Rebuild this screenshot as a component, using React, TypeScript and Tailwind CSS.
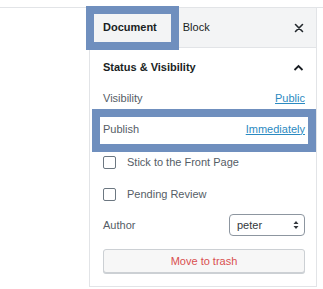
import React from "react";

export default function App() {
  return (
    <div className="relative w-[323px] h-[289px] bg-white overflow-hidden text-[11px]" style={{ fontFamily: '"Liberation Sans", Arial, sans-serif' }}>
      <div className="h-[8px] border-b border-[#e2e4e7]" />
      <div className="flex">
        <div className="w-[89px]" />
        <div className="w-[228px] border-l border-r border-[#e2e4e7]">
          <div className="h-[40px] bg-[#f3f4f5] border-b border-[#e2e4e7] flex items-center pl-[13px] pr-[11px]">
            <span className="font-bold text-[#191e23]">Document</span>
            <span className="ml-[26px] text-[#191e23]">Block</span>
            <svg className="ml-auto mr-[1px]" width="10" height="10" viewBox="0 0 10 10">
              <path d="M1.5 1.5 L8.5 8.5 M8.5 1.5 L1.5 8.5" stroke="#23282d" strokeWidth="1.6" strokeLinecap="round" />
            </svg>
          </div>
          <div className="pl-[13px] pr-[11px] pb-[13px] border-b border-[#e2e4e7]">
            <div className="h-[39px] flex items-center justify-between">
              <span className="font-bold text-[#191e23]">Status &amp; Visibility</span>
              <svg className="mr-[1px]" width="11" height="8" viewBox="0 0 11 8">
                <path d="M1.5 6 L5.5 2 L9.5 6" fill="none" stroke="#191e23" strokeWidth="1.8" />
              </svg>
            </div>
            <div className="h-[22px] flex items-center justify-between">
              <span className="text-[#555d66]">Visibility</span>
              <span className="text-[#2b8ac1] underline">Public</span>
            </div>
            <div className="mt-[9px] h-[22px] flex items-center justify-between">
              <span className="text-[#555d66]">Publish</span>
              <span className="text-[#2b8ac1] underline">Immediately</span>
            </div>
            <div className="mt-[11px] h-[22px] flex items-center">
              <span className="w-[13px] h-[13px] border-[1.5px] border-[#6c7781] rounded-[2px]" />
              <span className="ml-[11px] text-[#555d66]">Stick to the Front Page</span>
            </div>
            <div className="mt-[10px] h-[22px] flex items-center">
              <span className="w-[13px] h-[13px] border-[1.5px] border-[#6c7781] rounded-[2px]" />
              <span className="ml-[11px] text-[#555d66]">Pending Review</span>
            </div>
            <div className="mt-[9px] h-[22px] flex items-center justify-between">
              <span className="text-[#555d66]">Author</span>
              <div className="w-[76px] h-[22px] border border-[#8d96a0] rounded-[4px] flex items-center pl-[7px] pr-[5px] text-[#32373c]">
                <span>peter</span>
                <svg className="ml-auto" width="6" height="10" viewBox="0 0 6 10">
                  <path d="M0.5 4 L3 1 L5.5 4 Z M0.5 6 L3 9 L5.5 6 Z" fill="#32373c" />
                </svg>
              </div>
            </div>
            <div className="mt-[13px] h-[24px] border border-[#ccd0d4] rounded-[3px] bg-[#f7f7f7] shadow-[0_1px_0_#ccd0d4] flex items-center justify-center text-[#d94f4f]">
              Move to trash
            </div>
          </div>
        </div>
      </div>
      <div className="absolute left-[86px] top-[6px] w-[93px] h-[44px] border-[8px] border-[#6f8fbe]" />
      <div className="absolute left-[92px] top-[109px] w-[224px] h-[43px] border-[8px] border-[#6f8fbe]" />
    </div>
  );
}
